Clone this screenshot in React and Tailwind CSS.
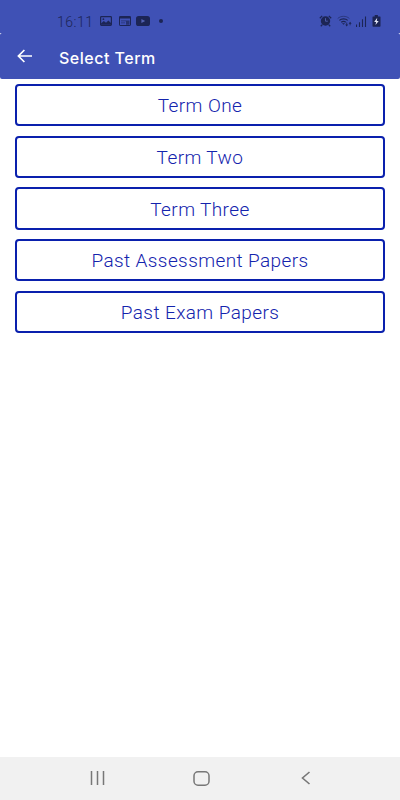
import React from "react";

const terms = ["Term One", "Term Two", "Term Three", "Past Assessment Papers", "Past Exam Papers"];

const StatusBar = () => {
  return (
    <div className="h-[33px] bg-[#3f51b5] text-[#1c2555] flex items-start justify-between pl-[57px] pr-[19px] pt-[14px]">
      <div className="flex items-center h-[14px]">
        <span className="w-[36px] mr-[7px] mt-px text-[14px] leading-[14px] font-light tracking-[0.5px] whitespace-nowrap">16:11</span>

        {/* Picture */}
        <svg className="w-[12px] h-[10px] mr-[7px]" viewBox="0 0 12 10">
          <rect x="0.6" y="0.6" width="10.8" height="8.8" rx="0.8" fill="none" stroke="currentColor" strokeWidth="1.2" />
          <path d="M1 8.8V7.4l2.8-2.3 2.2 1.7 2.4-2.2L11 7v1.8z" fill="currentColor" />
          <circle cx="3.4" cy="3.2" r="0.9" fill="currentColor" />
        </svg>

        {/* News window */}
        <svg className="w-[12px] h-[10px] mr-[5px]" viewBox="0 0 12 10">
          <rect x="0.5" y="0.5" width="11" height="9" rx="0.6" fill="none" stroke="currentColor" />
          <path d="M0.5 0.5h11v2H.5z" fill="currentColor" />
          <path d="M7 5h3.5v3.8H7zM2 4.4h8.5v.8H2zM2 6.5h4v.7H2z" fill="currentColor" opacity="0.7" />
        </svg>

        {/* Video */}
        <svg className="w-[14px] h-[10px] mr-[9px]" viewBox="0 0 14 10">
          <rect width="14" height="10" rx="2.6" fill="currentColor" />
          <path d="M5.4 2.9v4.2L9.2 5z" fill="#5362b2" />
        </svg>

        <span className="w-1 h-1 rounded-full bg-[#1c2555]" />
      </div>

      <div className="flex items-center h-[14px]">
        {/* Alarm */}
        <svg className="w-[13px] h-[12px] mr-[5px]" viewBox="0 0 13 12">
          <circle cx="6.5" cy="6" r="4.7" fill="currentColor" />
          <path d="M.8 3.2 3.2.9M12.2 3.2 9.8.9M3.2 9.8 1.8 11.2M9.8 9.8l1.4 1.4" stroke="currentColor" strokeWidth="1.3" />
          <path d="M6.5 3.2v3h2.3" fill="none" stroke="#5261b1" strokeWidth="0.9" />
        </svg>

        {/* Wifi */}
        <svg className="w-[15px] h-[12px] mr-[4px]" viewBox="0 0 15 12">
          <path d="M.7 3.5C3.8.6 9.4.6 12.4 3.5" fill="none" stroke="currentColor" strokeWidth="1" opacity="0.55" />
          <path d="M2.4 5.4C4.6 3.4 8.5 3.4 10.7 5.4M4.2 7.3C5.6 6.2 7.5 6.2 8.8 7.3" fill="none" stroke="currentColor" strokeWidth="1.2" />
          <path d="m5 8.2 1.5 1.6L8 8.2zM8.2 9.5h3L9.7 11.5zM11.6 8.8h3L13.1 6.8z" fill="currentColor" />
          <path d="M9.7 7.5v2.5M13.1 8v2.3" stroke="currentColor" strokeWidth="0.8" />
        </svg>

        {/* Signal */}
        <svg className="w-[11px] h-[11px] mr-[5px]" viewBox="0 0 11 11">
          <path d="M.5 11V8.5M3.5 11V6.2M6.5 11V3.2M9.5 11V.5" stroke="currentColor" strokeWidth="1.1" />
        </svg>

        {/* Battery */}
        <svg className="w-[9px] h-[12px]" viewBox="0 0 9 12">
          <path d="M2.7 0h3.2v1.5H8q.5 0 .5.5v9q0 .7-.7.7H1.2q-.7 0-.7-.7V2q0-.5.5-.5h1.7z" fill="currentColor" />
          <path d="M5.2 2.8 2.2 7h1.9l-.6 3.1L6.7 6H4.8z" fill="#e2e5f5" />
        </svg>
      </div>
    </div>
  );
};

const App = () => {
  return (
    <div className="h-screen w-full flex flex-col bg-white overflow-hidden font-['Roboto',sans-serif]">
      <StatusBar />

      {/* Header */}
      <header className="h-[46px] bg-white">
        <div className="h-full rounded-[2px] bg-[#3f51b5] flex items-center pl-[17px] text-white">
          <svg className="w-[16px] h-[14px] mr-[26px] -mt-[1px]" viewBox="0 0 16 14" fill="none" stroke="currentColor" strokeWidth="1.7">
            <path d="M15 7H1.4M7.4 1 1.4 7l6 6" />
          </svg>
          <h1 className="mt-[4px] text-[16px] leading-6 font-medium tracking-[0.5px] font-['Inter',sans-serif] whitespace-nowrap">
            Select Term
          </h1>
        </div>
      </header>

      {/* Terms */}
      <main className="flex-1 flex flex-col gap-[9.6px] px-[15px] pt-[4.9px]">
        {terms.map((term) => (
          <button
            key={term}
            className="h-[42.2px] shrink-0 border-2 border-[#0a20ad] rounded-[4px] flex items-center justify-center text-[#1424ad] text-[19px] leading-6 font-[350] tracking-[0.4px] pt-[2px]"
          >
            {term}
          </button>
        ))}
      </main>

      {/* Navigation bar */}
      <nav className="h-[43px] bg-[#f1f1f1] text-[#777777] flex items-center pl-[90px]">
        <svg className="w-[15px] h-[14px] mr-[88px] -mt-px" viewBox="0 0 15 14">
          <path d="M1.5 0v14M7.5 0v14M13.5 0v14" stroke="currentColor" strokeWidth="1.5" />
        </svg>
        <svg className="w-[17px] h-[15px] mr-[91px]" viewBox="0 0 17 15">
          <rect x="1" y="0.8" width="15" height="13.4" rx="4" fill="none" stroke="currentColor" strokeWidth="1.5" />
        </svg>
        <svg className="w-[10px] h-[14px] -mt-px" viewBox="0 0 10 14">
          <path d="M8.5 1 1.5 7l7 6" fill="none" stroke="currentColor" strokeWidth="1.6" />
        </svg>
      </nav>
    </div>
  );
};

export default App;
